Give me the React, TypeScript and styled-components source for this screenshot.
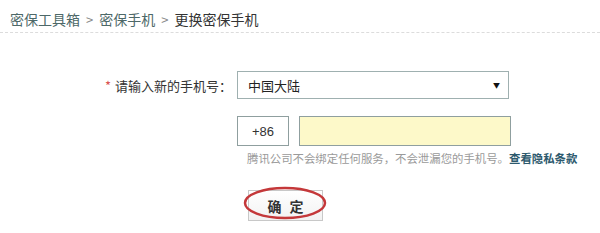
import React from 'react';
import styled, { createGlobalStyle } from 'styled-components';

const GlobalStyle = createGlobalStyle`
	html, body {
		margin: 0;
		padding: 0;
		background: #fff;
	}
	body {
		font-family: 'Noto Sans CJK SC', 'Liberation Sans', sans-serif;
		color: #333;
	}
`;

const Page = styled.div`
	width: 600px;
	height: 233px;
	overflow: hidden;
`;

const Breadcrumb = styled.div`
	display: flex;
	align-items: center;
	height: 33px;
	padding: 6px 10px 0;
	border-bottom: 1px dashed #dcdcdc;
	font-size: 14px;
	box-sizing: border-box;
`;

const Crumb = styled.span<{ $current?: boolean }>`
	color: ${(p) => (p.$current ? '#333' : '#4d6868')};
`;

const Sep = styled.span`
	color: #888;
	margin: 0 6px;
	font-size: 13px;
`;

const Form = styled.div`
	display: flex;
	flex-direction: column;
	padding-top: 38px;
`;

const Row = styled.div<{ $top?: number }>`
	display: flex;
	align-items: center;
	margin-top: ${(p) => p.$top ?? 0}px;
`;

const Label = styled.div`
	width: 237px;
	box-sizing: border-box;
	padding-right: 5px;
	text-align: right;
	font-size: 13px;
	color: #333;
`;

const Star = styled.span`
	color: #d9534f;
	margin-right: 4px;
`;

const Select = styled.div`
	width: 272px;
	height: 28px;
	box-sizing: border-box;
	border: 1px solid #9fb0b0;
	display: flex;
	align-items: center;
	justify-content: space-between;
	padding: 0 8px 0 10px;
	font-size: 13px;
	color: #222;
`;

const Arrow = styled.span`
	font-size: 7px;
	color: #111;
`;

const Field = styled.div<{ $w: number; $bg?: string }>`
	width: ${(p) => p.$w}px;
	height: 30px;
	box-sizing: border-box;
	border: 1px solid #8f9f9f;
	background: ${(p) => p.$bg ?? '#fff'};
	display: flex;
	align-items: center;
	justify-content: center;
	font-size: 13px;
	color: #333;
	font-family: 'Liberation Sans', sans-serif;
`;

const Fields = styled.div`
	display: flex;
	gap: 10px;
	margin-left: 237px;
`;

const Hint = styled.div`
	margin-left: 247px;
	font-size: 11.4px;
	color: #9a9a9a;
`;

const HintLink = styled.span`
	color: #2d5a6e;
	font-weight: 700;
`;

const ButtonWrap = styled.div`
	position: relative;
	margin-left: 248px;
	width: 75px;
`;

const Button = styled.div`
	width: 75px;
	height: 31px;
	box-sizing: border-box;
	border: 1px solid #c8c8c8;
	background: linear-gradient(#fff, #f2f2f2);
	display: flex;
	align-items: center;
	justify-content: center;
	font-size: 14px;
	font-weight: 700;
	color: #333;
	letter-spacing: 8px;
	padding-left: 8px;
`;

const Ring = styled.svg`
	position: absolute;
	left: -6px;
	top: -4px;
	pointer-events: none;
`;

export default function App() {
	return (
		<Page>
			<GlobalStyle />
			<Breadcrumb>
				<Crumb>密保工具箱</Crumb>
				<Sep>&gt;</Sep>
				<Crumb>密保手机</Crumb>
				<Sep>&gt;</Sep>
				<Crumb $current>更换密保手机</Crumb>
			</Breadcrumb>
			<Form>
				<Row>
					<Label>
						<Star>*</Star>请输入新的手机号：
					</Label>
					<Select>
						<span>中国大陆</span>
						<Arrow>▼</Arrow>
					</Select>
				</Row>
				<Row $top={17}>
					<Fields>
						<Field $w={52}>+86</Field>
						<Field $w={212} $bg="#fdf9c9" />
					</Fields>
				</Row>
				<Row $top={4}>
					<Hint>
						腾讯公司不会绑定任何服务，不会泄漏您的手机号。<HintLink>查看隐私条款</HintLink>
					</Hint>
				</Row>
				<Row $top={24}>
					<ButtonWrap>
						<Button>确定</Button>
						<Ring width="86" height="36" viewBox="0 0 86 36">
							<ellipse cx="43" cy="17" rx="40" ry="15" fill="none" stroke="#c4383a" strokeWidth="2.5" />
						</Ring>
					</ButtonWrap>
				</Row>
			</Form>
		</Page>
	);
}
